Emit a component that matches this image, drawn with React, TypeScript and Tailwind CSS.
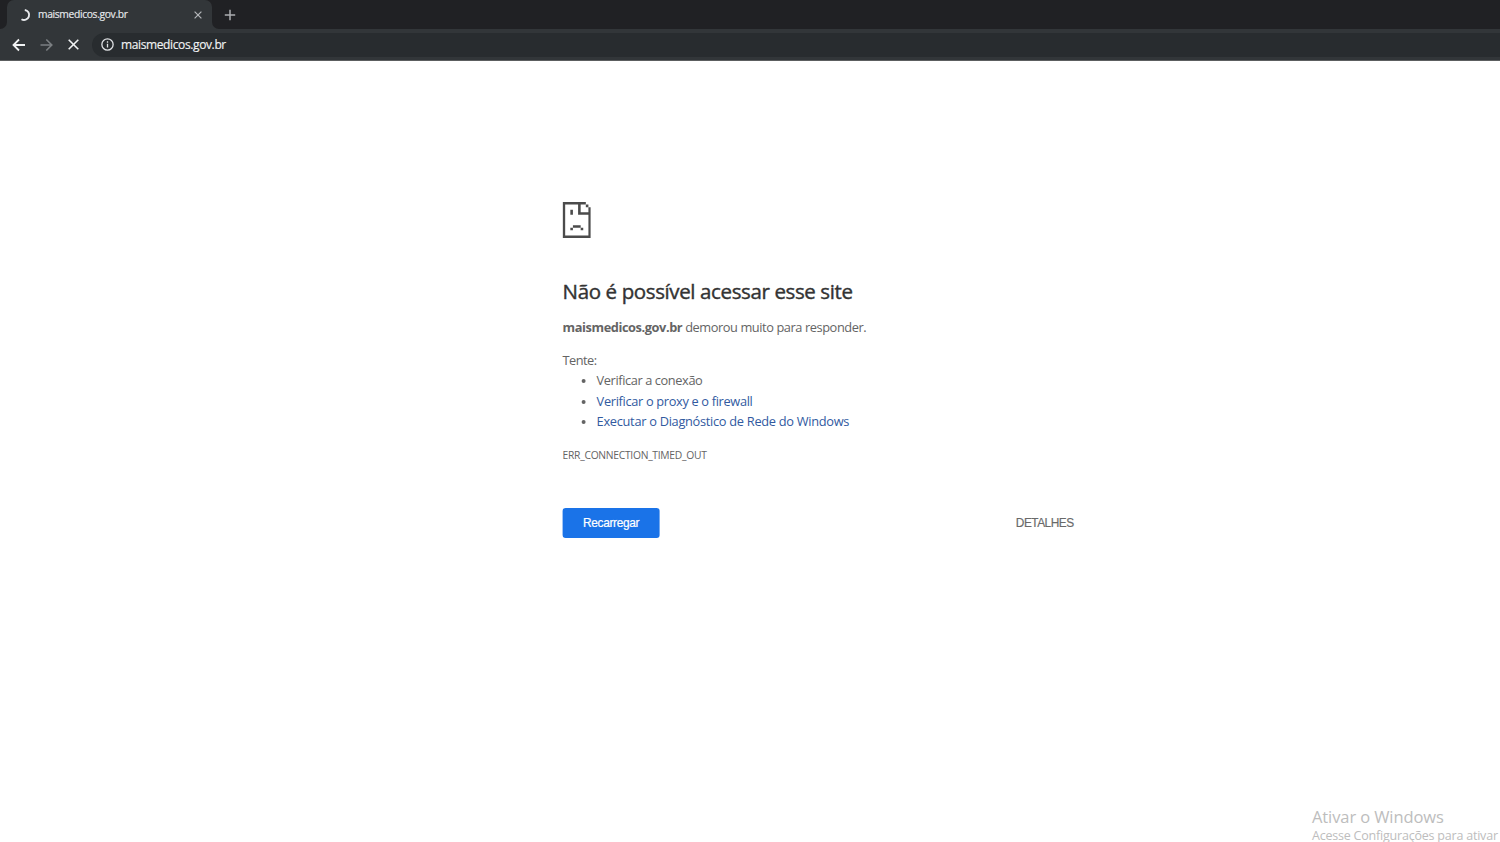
const suggestions = [
  { text: "Verificar a conexão", link: false, tracking: "tracking-[-0.4px]" },
  { text: "Verificar o proxy e o firewall", link: true, tracking: "tracking-[-0.33px]" },
  { text: "Executar o Diagnóstico de Rede do Windows", link: true, tracking: "tracking-[-0.29px]" },
]

function TabStrip() {
  return (
    <div className="flex h-[29px] bg-[#202124] pl-[7px]">
      <div className="relative flex h-full w-[205px] items-center rounded-t-[7px] bg-[#323639] pl-[12px]">
        {/* Flared bottom corners */}
        <svg className="absolute bottom-0 -left-[7px]" width="7" height="7" viewBox="0 0 7 7">
          <path d="M7 0v7H0A7 7 0 0 0 7 0Z" fill="#323639" />
        </svg>
        <svg className="absolute -right-[7px] bottom-0" width="7" height="7" viewBox="0 0 7 7">
          <path d="M0 0v7h7A7 7 0 0 1 0 0Z" fill="#323639" />
        </svg>
        <svg width="12" height="14" viewBox="0 0 12 14" fill="none" stroke="#e8eaed" strokeWidth="1.9">
          <path d="M5.8 2A5 5 0 1 1 2.5 11.2" />
        </svg>
        <span className="mb-px ml-[7px] w-[90px] text-[10.3px] leading-[14px] tracking-[-0.35px] whitespace-nowrap text-[#e8eaed] [-webkit-text-stroke:0.15px]">
          maismedicos.gov.br
        </span>
        <svg className="ml-[66px]" width="8" height="8" viewBox="0 0 8 8" stroke="#b4b7ba" strokeWidth="1.2">
          <path d="M.6.6l6.8 6.8M7.4.6L.6 7.4" />
        </svg>
      </div>
      <svg className="mt-[9px] ml-[12px]" width="12" height="12" viewBox="0 0 12 12" stroke="#aaadb0" strokeWidth="1.5">
        <path d="M6 .8v10.4M.8 6h10.4" />
      </svg>
    </div>
  )
}

function Toolbar() {
  return (
    <div className="flex h-[32px] items-center border-b border-[#5c5e60] bg-[#323639] pl-[12px]">
      <svg width="14" height="14" viewBox="0 0 14 14" fill="none" stroke="#f1f3f4" strokeWidth="1.8">
        <path d="M13 7H2M7 1.5L1.5 7L7 12.5" />
      </svg>
      <svg className="ml-[14px]" width="13" height="14" viewBox="0 0 13 14" fill="none" stroke="#7b7f82" strokeWidth="1.6">
        <path d="M.5 7h11M6.3 1.5L11.8 7l-5.5 5.5" />
      </svg>
      <svg className="ml-[15px]" width="11" height="11" viewBox="0 0 11 11" stroke="#f1f3f4" strokeWidth="1.6">
        <path d="M.7.7l9.6 9.6M10.3.7L.7 10.3" />
      </svg>
      <div className="ml-[13px] flex h-[24px] flex-1 items-center rounded-l-full bg-[#282c2f] pl-[9px]">
        <svg width="13" height="13" viewBox="0 0 12 12" fill="none" stroke="#dfe1e4" strokeWidth="1.2">
          <circle cx="6" cy="6" r="5.2" />
          <path d="M6 5.3v3.5M6 3v1.3" />
        </svg>
        <span className="ml-[7px] text-[12px] leading-[16px] tracking-[-0.38px] whitespace-nowrap text-[#f1f3f4] [-webkit-text-stroke:0.15px]">
          maismedicos.gov.br
        </span>
      </div>
    </div>
  )
}

function SadPageIcon() {
  return (
    <svg width="28.4" height="36" viewBox="0 0 11 14" preserveAspectRatio="none" fill="#4b4b4b">
      <path d="M0 0h9v1H7v3h3V2h1v12H0zM1 1v12h9V5H6V1z" fillRule="evenodd" />
      <path d="M9 1h1v1H9zM3 3h1v2H3zM4 9h3v1H4zM3 10h1v1H3zM7 10h1v1H7z" />
    </svg>
  )
}

export default function App() {
  return (
    <div className="relative flex h-screen w-full flex-col overflow-hidden bg-white font-['Open_Sans','Noto_Sans',sans-serif]">
      <TabStrip />
      <Toolbar />

      <main className="mx-auto w-[512px] translate-x-[68.6px] pt-[141px] text-[12.8px] leading-[20.5px] text-[#646464]">
        <SadPageIcon />
        <h1 className="mt-[41px] text-[20.5px] leading-[25px] font-medium tracking-[-0.38px] whitespace-nowrap text-[#333] [-webkit-text-stroke:0.4px]">
          Não é possível acessar esse site
        </h1>
        <p className="mt-[13px] tracking-[-0.42px] whitespace-nowrap">
          <strong className="font-bold">maismedicos.gov.br</strong> demorou muito para responder.
        </p>
        <p className="mt-[12px] tracking-[-0.55px]">Tente:</p>
        <ul className="list-disc pl-[34px] marker:text-[11px]">
          {suggestions.map((item) => (
            <li key={item.text} className={item.tracking}>
              {item.link ? (
                <a href="#" className="text-[#315a9f]">{item.text}</a>
              ) : (
                item.text
              )}
            </li>
          ))}
        </ul>
        <p className="mt-[13px] text-[10.3px] tracking-[-0.28px]">ERR_CONNECTION_TIMED_OUT</p>

        <div className="mt-[43px] flex items-center justify-between pr-px font-['Liberation_Sans',Arial,sans-serif]">
          <button className="h-[30px] w-[97px] rounded-[3px] bg-[#1a73e8] text-[11.9px] tracking-[-0.35px] text-white [-webkit-text-stroke:0.2px]">
            Recarregar
          </button>
          <button className="text-[11.9px] tracking-[-0.52px] text-[#696969] [-webkit-text-stroke:0.15px]">DETALHES</button>
        </div>
      </main>

      {/* Windows activation watermark */}
      <div className="absolute top-[806px] left-[1312px] whitespace-nowrap text-[#bdbdbd]">
        <p className="text-[16.5px] leading-[21px] tracking-[-0.1px]">Ativar o Windows</p>
        <p className="text-[12.5px] leading-[18px] tracking-[-0.21px]">Acesse Configurações para ativar</p>
      </div>
    </div>
  )
}
